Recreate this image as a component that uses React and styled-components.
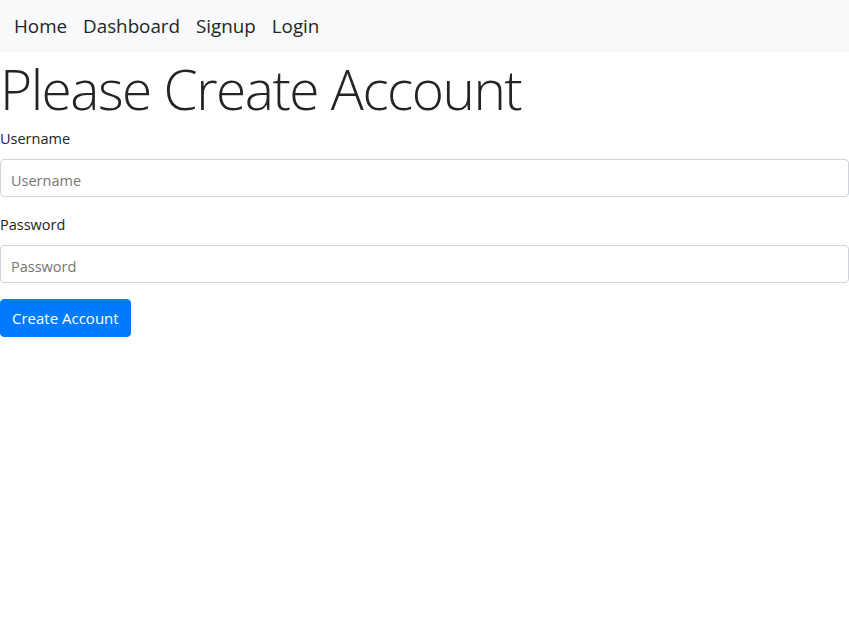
import styled, { createGlobalStyle } from 'styled-components';

const GlobalStyle = createGlobalStyle`
  body {
    margin: 0;
    font-family: "Open Sans", "Noto Sans", sans-serif;
    font-size: 16px;
    line-height: 1.5;
    color: #212529;
    background: #fff;
  }
  * {
    box-sizing: border-box;
  }
`;

//top navbar
const Navbar = styled.nav`
  display: flex;
  align-items: center;
  height: 52px;
  padding: 0 6px;
  background: #f8f9fa;
`;

const NavLink = styled.a`
  padding: 0 8px;
  font-size: 18.8px;
  line-height: 30px;
  color: #212529;
  text-decoration: none;
  cursor: pointer;
`;

const Title = styled.h1`
  margin: 3px 0 5px;
  font-size: 55px;
  font-weight: 300;
  line-height: 67px;
  letter-spacing: -1.5px;
`;

const FormGroup = styled.div`
  margin-bottom: 16px;
`;

const Label = styled.label`
  display: block;
  margin-bottom: 8px;
  font-size: 14.5px;
  line-height: 24px;
`;

const Input = styled.input`
  display: block;
  width: 100%;
  height: 38px;
  padding: 8px 10px 4px;
  font-family: inherit;
  font-size: 14.5px;
  color: #495057;
  background: #fff;
  border: 1px solid #ced4da;
  border-radius: 4px;
  outline: none;
  ::placeholder {
    color: #6c757d;
  }
`;

const Button = styled.button`
  height: 38px;
  padding: 6px 11px;
  font-family: inherit;
  font-size: 15px;
  color: #fff;
  background: #007bff;
  border: 1px solid #007bff;
  border-radius: 4px;
  cursor: pointer;
`;

const App = () => {
  return (
    <>
      <GlobalStyle />
      <Navbar>
        <NavLink>Home</NavLink>
        <NavLink>Dashboard</NavLink>
        <NavLink>Signup</NavLink>
        <NavLink>Login</NavLink>
      </Navbar>
      <Title>Please Create Account</Title>
      <form onSubmit={(e) => e.preventDefault()}>
        <FormGroup>
          <Label htmlFor="username">Username</Label>
          <Input id="username" type="text" placeholder="Username" />
        </FormGroup>
        <FormGroup>
          <Label htmlFor="password">Password</Label>
          <Input id="password" type="password" placeholder="Password" />
        </FormGroup>
        <Button type="submit">Create Account</Button>
      </form>
    </>
  );
};

export default App;
